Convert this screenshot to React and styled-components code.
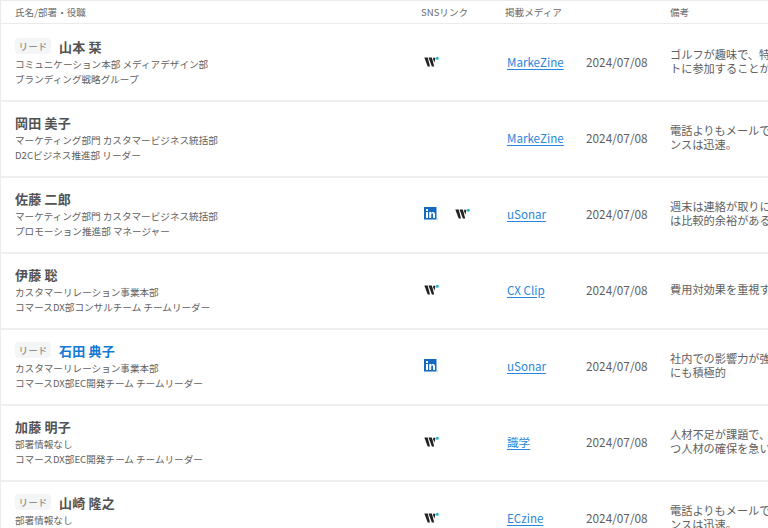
import React from "react";
import styled, { createGlobalStyle } from "styled-components";

const Global = createGlobalStyle`
  html, body { margin: 0; padding: 0; background: #fff; overflow: hidden; }
  body { font-family: "Noto Sans CJK JP", "Noto Sans", sans-serif; color: #4a4a4a; }
`;
const Page = styled.div`
  width: 768px; height: 528px; overflow: hidden; box-sizing: border-box;
  border-left: 1px solid #ebebeb; border-top: 1px solid #ebebeb;
`;
const columns = "grid-template-columns: 406px 84px 81px 84px 120px;";
const HeaderRow = styled.div`
  display: grid; ${columns} height: 22px; align-items: center; padding-left: 14px;
  border-bottom: 1px solid #ebebeb; margin-bottom: 2px; font-size: 9.6px; color: #6a6a6a;
`;
const Row = styled.div`
  display: grid; ${columns} height: 70px; padding-bottom: 4px; align-items: center; padding-left: 14px;
  border-bottom: 2px solid #efefef;
`;
const NameCell = styled.div`display: flex; flex-direction: column;`;
const NameLine = styled.div`display: flex; align-items: center; gap: 8px; height: 20px; margin-top: 1px; margin-bottom: 1px;`;
const Badge = styled.span`
  width: 36px; height: 16px; border-radius: 4px; background: #f4f5f6; color: #777;
  font-size: 9.6px; display: flex; align-items: center; justify-content: center;
`;
const Name = styled.span`
  font-size: 13px; font-weight: 700; letter-spacing: 0.2px; color: ${p => (p.$link ? "#1478d8" : "#525252")};
`;
const Sub = styled.div`font-size: 9.6px; line-height: 15px; color: #606060; white-space: nowrap;`;
const Sns = styled.div`display: flex; align-items: center; gap: 17px; padding-left: 3px;`;
const MediaCell = styled.div`padding-bottom: 2px;`;
const MediaLink = styled.a`
  font-size: 11.6px; color: #2a86de; text-decoration: underline; text-underline-offset: 2px;
  margin-left: 2px;
`;
const DateCell = styled.div`font-size: 11.8px; color: #606060;`;
const Note = styled.div`font-size: 11.2px; line-height: 14px; color: #606060; white-space: nowrap;`;

const Wantedly = () => (
  <svg width="15" height="11" viewBox="0 0 15 11">
    <path d="M0.300 1.500h3.400l2.300 9H3.700z" fill="#222" />
    <path d="M4.500 1.500h3.400l2.300 9H7.900z" fill="#222" />
    <path d="M9.200 1.800h2.200l-.9 5-1.300-3.400z" fill="#222" />
    <circle cx="13.300" cy="2.300" r="1.500" fill="#27b5cf" />
  </svg>
);
const LinkedIn = () => (
  <svg width="14" height="13" viewBox="0 0 14 13">
    <rect width="12.500" height="12.500" fill="#1469c0" />
    <rect x="2" y="5" width="2" height="6" fill="#fff" />
    <rect x="2" y="2" width="2" height="2" fill="#fff" />
    <path d="M5.200 5h1.900v.9c.4-.6 1-1 1.900-1 1.500 0 2 1 2 2.400V11H9.100V7.700c0-.7-.2-1.200-.9-1.200s-1 .5-1 1.200V11h-2z" fill="#fff" />
    <rect x="13" y="11.500" width="1" height="1" fill="#9cc2e8" />
  </svg>
);

const people = [
  { lead: true, name: "山本 栞", sub: ["コミュニケーション本部 メディアデザイン部", "ブランディング戦略グループ"], sns: ["w"], media: "MarkeZine", note: ["ゴルフが趣味で、特", "トに参加することが"] },
  { name: "岡田 美子", sub: ["マーケティング部門 カスタマービジネス統括部", "D2Cビジネス推進部 リーダー"], sns: [], media: "MarkeZine", note: ["電話よりもメールで", "ンスは迅速。"] },
  { name: "佐藤 二郎", sub: ["マーケティング部門 カスタマービジネス統括部", "プロモーション推進部 マネージャー"], sns: ["l", "w"], media: "uSonar", note: ["週末は連絡が取りに", "は比較的余裕がある"] },
  { name: "伊藤 聡", sub: ["カスタマーリレーション事業本部", "コマースDX部コンサルチーム チームリーダー"], sns: ["w"], media: "CX Clip", note: ["費用対効果を重視す"] },
  { lead: true, link: true, name: "石田 典子", sub: ["カスタマーリレーション事業本部", "コマースDX部EC開発チーム チームリーダー"], sns: ["l"], media: "uSonar", note: ["社内での影響力が強", "にも積極的"] },
  { name: "加藤 明子", sub: ["部署情報なし", "コマースDX部EC開発チーム チームリーダー"], sns: ["w"], media: "識学", note: ["人材不足が課題で、", "つ人材の確保を急い"] },
  { lead: true, name: "山崎 隆之", sub: ["部署情報なし", "コマースDX部EC開発チーム チームリーダー"], sns: ["w"], media: "ECzine", note: ["電話よりもメールで", "ンスは迅速。"] },
];

export default function App() {
  return (
    <Page>
      <Global />
      <HeaderRow>
        <div>氏名/部署・役職</div>
        <div>SNSリンク</div>
        <div>掲載メディア</div>
        <div />
        <div>備考</div>
      </HeaderRow>
      {people.map((p) => (
        <Row key={p.name}>
          <NameCell>
            <NameLine>
              {p.lead && <Badge>リード</Badge>}
              <Name $link={p.link}>{p.name}</Name>
            </NameLine>
            {p.sub.map((s) => <Sub key={s}>{s}</Sub>)}
          </NameCell>
          <Sns>{p.sns.map((s) => (s === "w" ? <Wantedly key={s} /> : <LinkedIn key={s} />))}</Sns>
          <MediaCell><MediaLink href="#">{p.media}</MediaLink></MediaCell>
          <DateCell>2024/07/08</DateCell>
          <Note>{p.note.map((n) => <div key={n}>{n}</div>)}</Note>
        </Row>
      ))}
    </Page>
  );
}
